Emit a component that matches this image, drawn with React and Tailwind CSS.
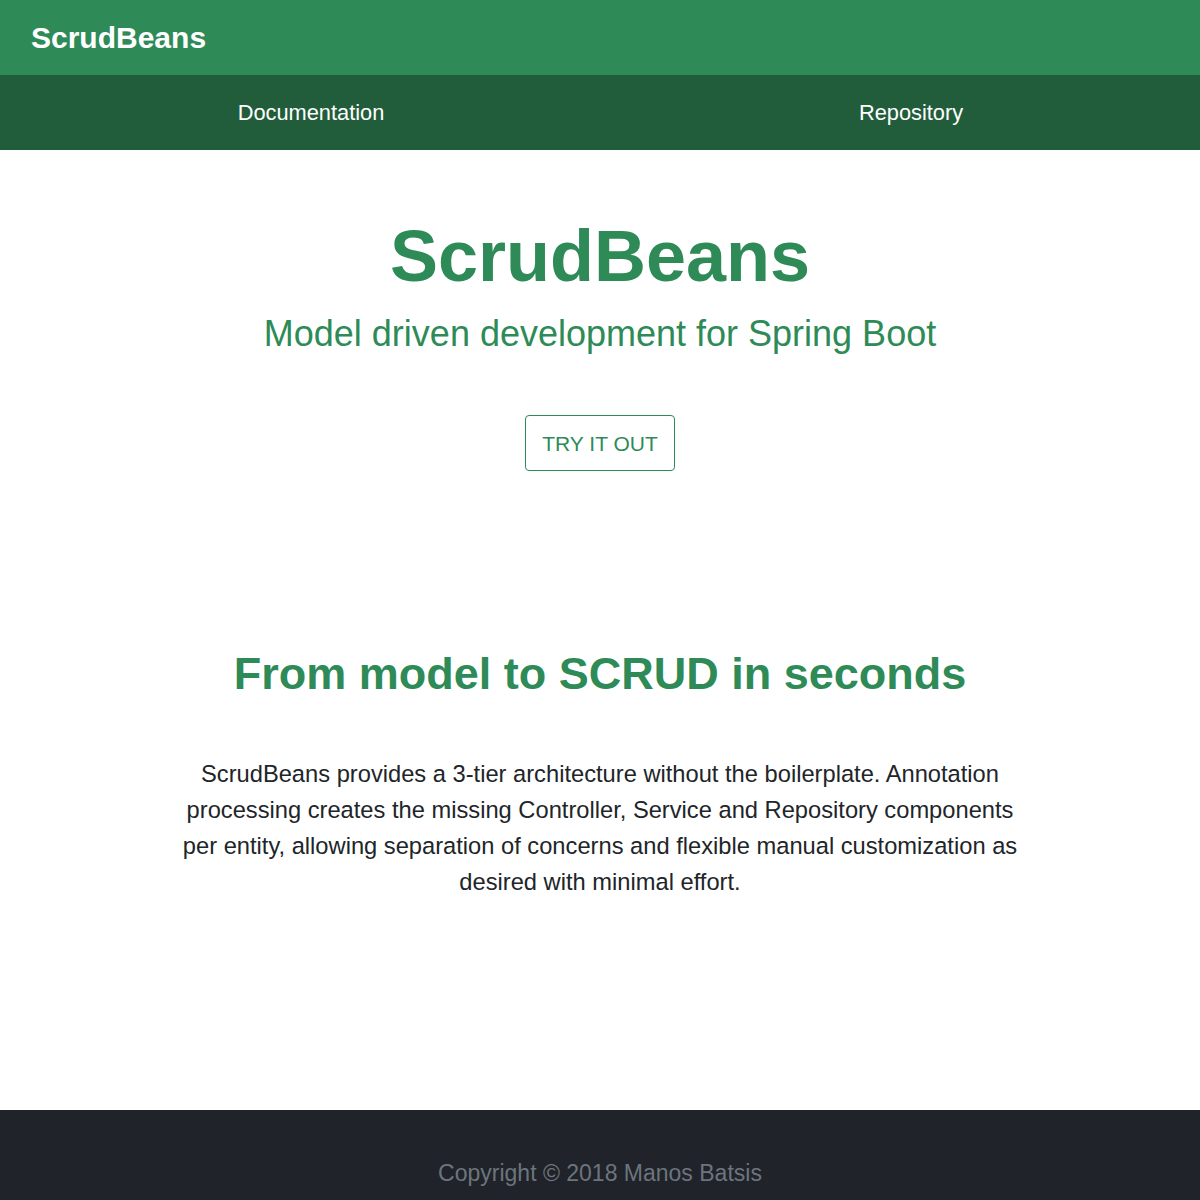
import React from "react";

const App = () => {
  return (
    <div className="min-h-screen bg-white font-['Liberation_Sans',Arial,sans-serif]">
      <header className="h-[75px] bg-[#2e8b57] flex items-center px-[31px]">
        <span className="text-[30px] font-bold text-white leading-none">ScrudBeans</span>
      </header>
      <nav className="h-[75px] bg-[#215d3b] flex">
        <div className="flex-1 flex items-center justify-center pl-[22px]">
          <a className="text-[21.8px] text-white leading-none">Documentation</a>
        </div>
        <div className="flex-1 flex items-center justify-center pl-[22px]">
          <a className="text-[21.8px] text-white leading-none">Repository</a>
        </div>
      </nav>

      <section className="flex flex-col items-center pt-[70px]">
        <h1 className="text-[72px] font-bold leading-none text-[#2e8b57]">ScrudBeans</h1>
        <p className="mt-[24px] text-[36px] leading-none text-[#2e8b57]">
          Model driven development for Spring Boot
        </p>
        <button className="mt-[63px] h-[56px] px-[16px] flex items-center border border-[#2e8b57] rounded-[4px] text-[21px] text-[#2e8b57] leading-none">
          TRY IT OUT
        </button>
      </section>

      <section className="flex flex-col items-center pt-[180px] pb-[210px]">
        <h2 className="text-[45px] font-bold leading-none text-[#2e8b57]">
          From model to SCRUD in seconds
        </h2>
        <p className="mt-[60px] w-[845px] text-center text-[23.7px] leading-[36px] text-[#212529]">
          ScrudBeans provides a 3-tier architecture without the boilerplate. Annotation
          processing creates the missing Controller, Service and Repository components per
          entity, allowing separation of concerns and flexible manual customization as desired
          with minimal effort.
        </p>
      </section>

      <footer className="h-[90px] bg-[#202329] flex justify-center pt-[52px]">
        <span className="text-[23px] leading-none text-[#6c757d]">Copyright © 2018 Manos Batsis</span>
      </footer>
    </div>
  );
};

export default App;
